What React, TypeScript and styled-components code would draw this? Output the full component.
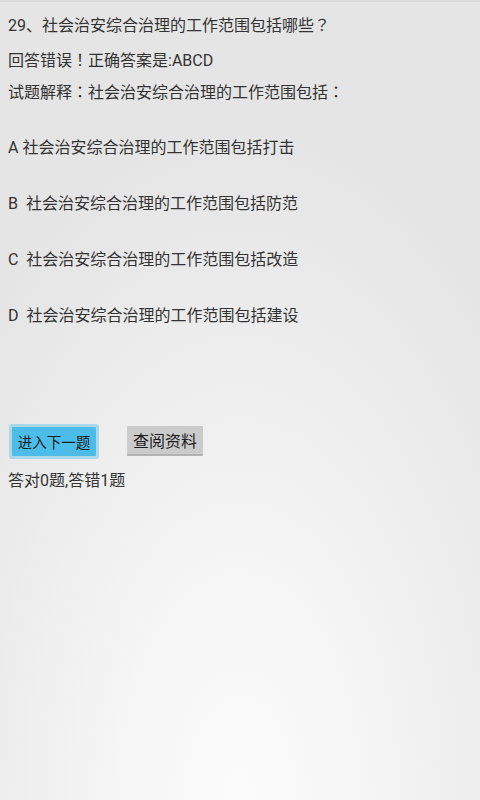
import React from "react";
import styled, { createGlobalStyle } from "styled-components";

const Global = createGlobalStyle`
  html, body { margin: 0; padding: 0; }
  body { font-family: Roboto, "Noto Sans CJK SC", "DejaVu Sans", sans-serif; }
`;

const Page = styled.div`
  box-sizing: border-box;
  min-height: 100vh;
  padding: 14px 8px 12px;
  border-top: 2px solid #d9d9d9;
  background: radial-gradient(ellipse 75% 85% at 50% 100%, #fbfbfb 0%, #f5f5f5 35%, #ececec 70%, #e5e5e5 100%);
  color: #333;
  display: flex;
  flex-direction: column;
`;

const Line = styled.div<{ $mt?: number }>`
  font-size: 16px;
  line-height: 20px;
  height: 20px;
  margin-top: ${(p) => p.$mt ?? 0}px;
  white-space: pre;
`;

const Punct = styled.span`
  font-family: "Noto Sans CJK JP", sans-serif;
  line-height: 0;
`;

const Options = styled.div`
  display: flex;
  flex-direction: column;
  gap: 36px;
  margin-top: 35px;
`;

const ButtonRow = styled.div`
  display: flex;
  align-items: center;
  gap: 31px;
  height: 36px;
  margin-top: 97px;
  padding-left: 4px;
`;

const Button = styled.button<{ $primary?: boolean }>`
  box-sizing: border-box;
  border: none;
  margin: 0;
  font-family: inherit;
  color: #1c1c1c;
  border-radius: 1px;
  padding: 0;
  display: flex;
  align-items: center;
  justify-content: center;
  ${(p) =>
    p.$primary
      ? `
    width: 84px;
    height: 29px;
    font-size: 14.5px;
    background: #4cbce8;
    box-shadow: 0 0 0 3px rgba(120, 200, 236, 0.55);
  `
      : `
    width: 76px;
    height: 30px;
    font-size: 16px;
    background: #cbcbcb;
    border-bottom: 2px solid #b3b3b3;
  `}
`;

export default function App() {
  return (
    <>
      <Global />
      <Page>
        <Line>
          29<Punct>、</Punct>社会治安综合治理的工作范围包括哪些<Punct>？</Punct>
        </Line>
        <Line $mt={15}>
          回答错误<Punct>！</Punct>正确答案是:ABCD
        </Line>
        <Line $mt={12}>
          试题解释<Punct>：</Punct>社会治安综合治理的工作范围包括<Punct>：</Punct>
        </Line>
        <Options>
          <Line>A 社会治安综合治理的工作范围包括打击</Line>
          <Line>B  社会治安综合治理的工作范围包括防范</Line>
          <Line>C  社会治安综合治理的工作范围包括改造</Line>
          <Line>D  社会治安综合治理的工作范围包括建设</Line>
        </Options>
        <ButtonRow>
          <Button $primary>进入下一题</Button>
          <Button>查阅资料</Button>
        </ButtonRow>
        <Line $mt={12}>答对0题,答错1题</Line>
      </Page>
    </>
  );
}
